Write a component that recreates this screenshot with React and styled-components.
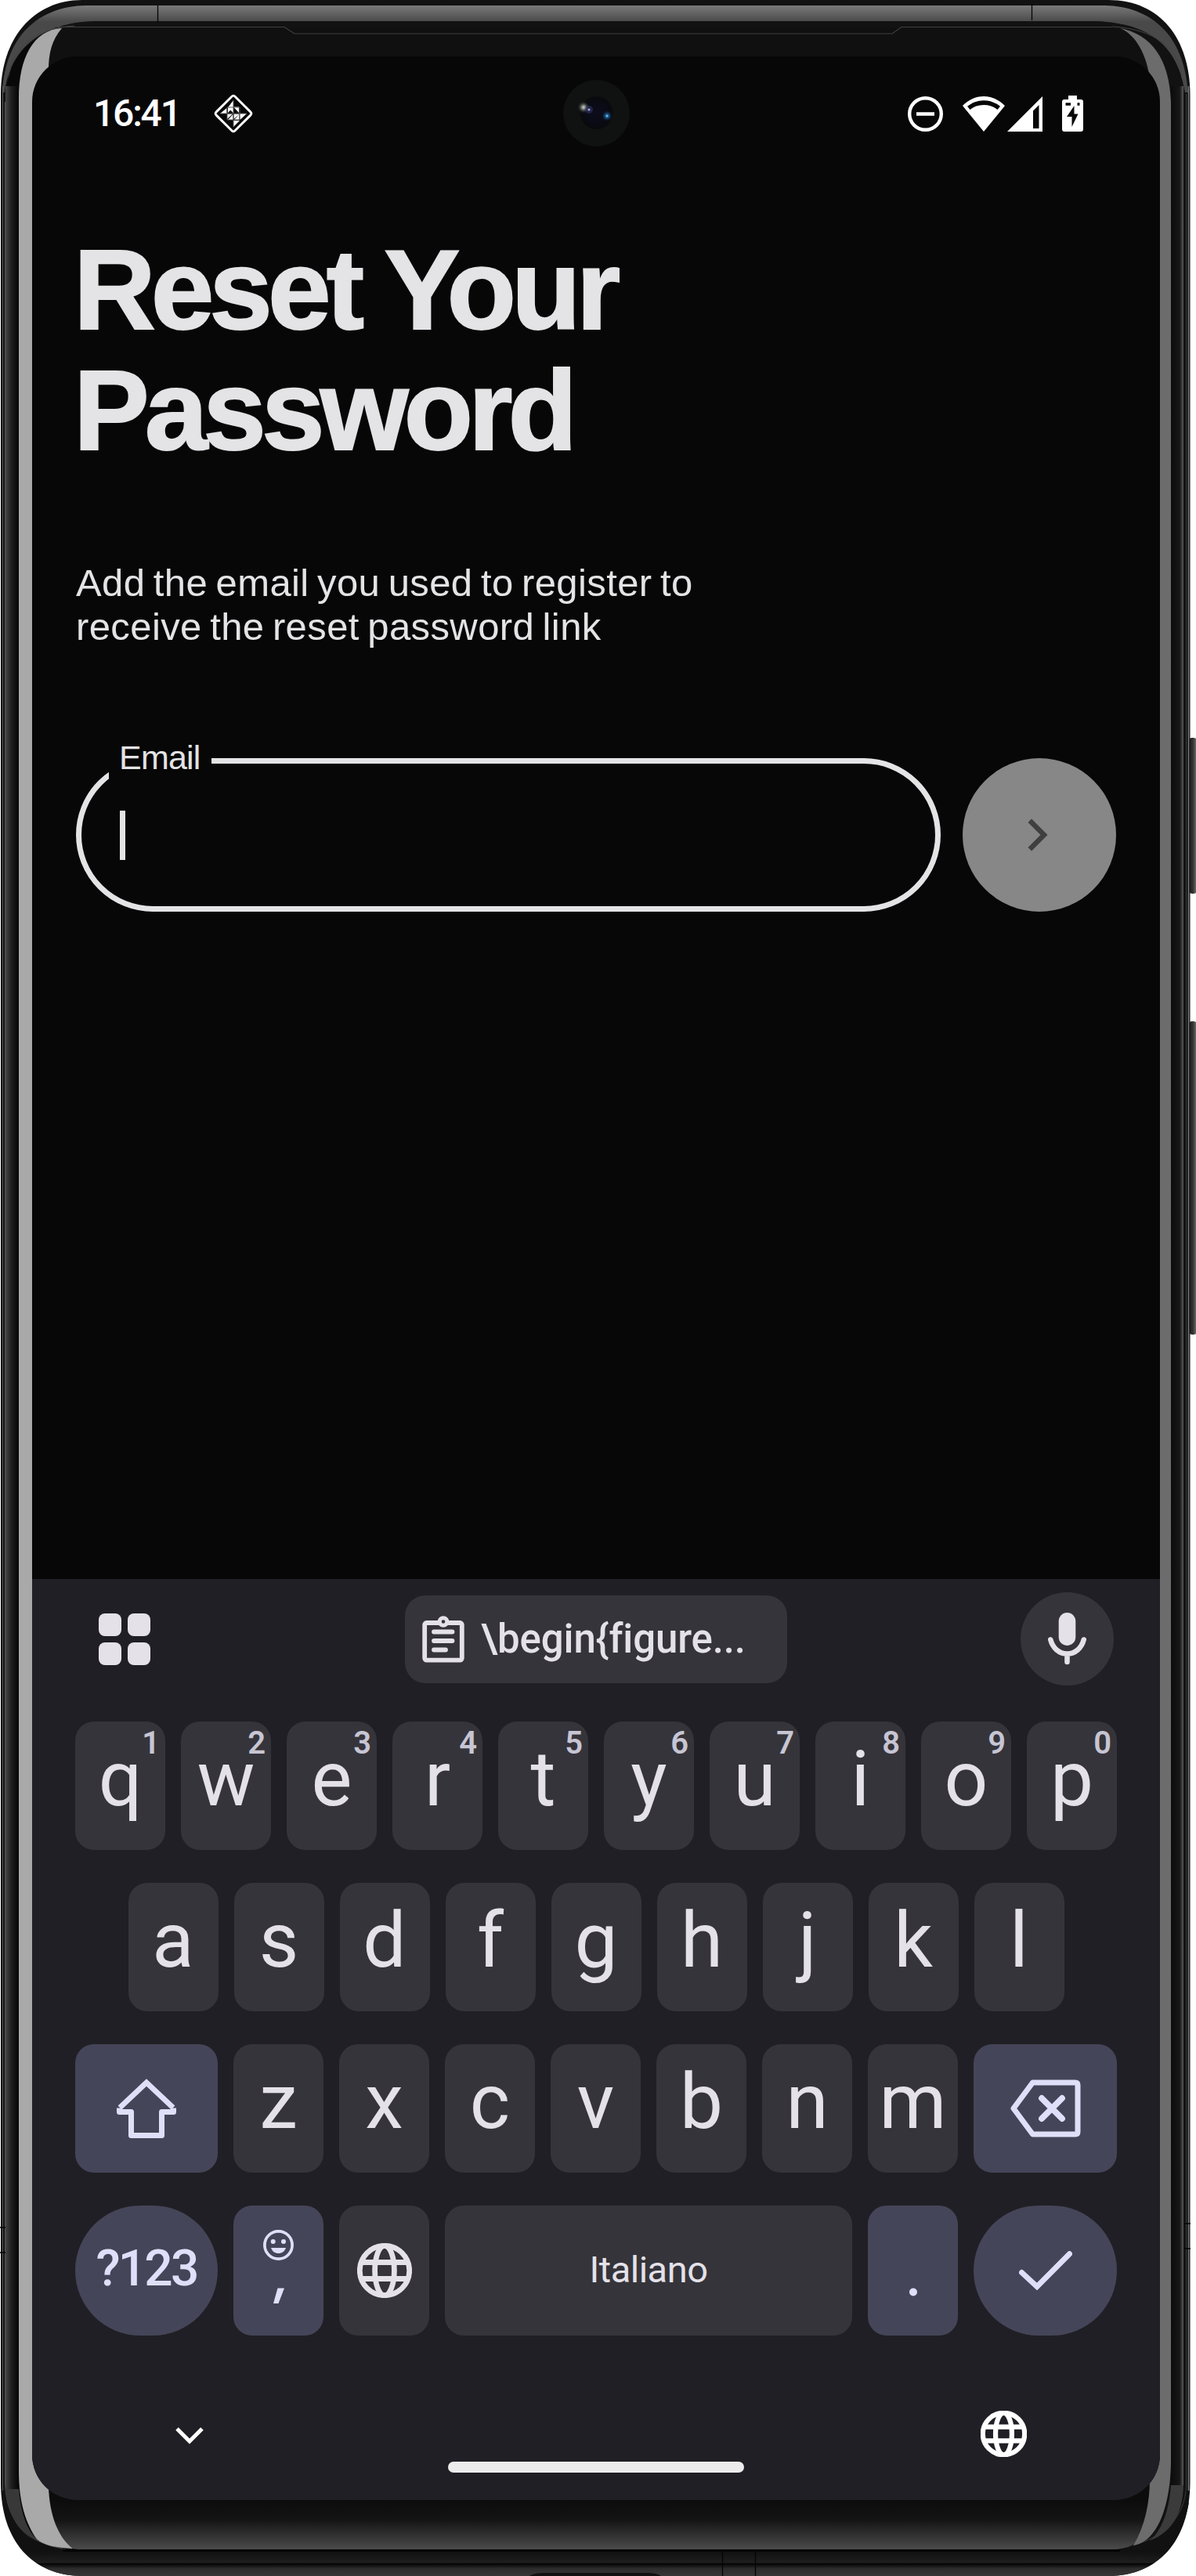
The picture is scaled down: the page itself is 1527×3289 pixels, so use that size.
import React from "react";
import styled, { createGlobalStyle, css } from "styled-components";

const GlobalStyle = createGlobalStyle`
  * { box-sizing: border-box; }
  body { margin: 0; background: #fff; }
  svg { display: block; flex: none; }
`;

const ui = `Roboto, "Noto Sans", sans-serif`;
const brand = `"Liberation Sans", Arial, sans-serif`;

const Device = styled.div`
  position: relative;
  width: 1527px;
  height: 3289px;
  padding: 72px 46px 97px 41px;
  overflow: hidden;
`;

const Casing = styled.svg`
  position: absolute;
  inset: 0;
`;

const Screen = styled.div`
  position: relative;
  display: flex;
  flex-direction: column;
  width: 1440px;
  height: 3120px;
  border-radius: 58px;
  overflow: hidden;
  background: #070707;
`;

const StatusBar = styled.header`
  display: flex;
  align-items: center;
  height: 146px;
  padding: 0 98px 0 78px;
  color: #fff;
`;

const Clock = styled.span`
  font: 500 48px/56px ${ui};
  letter-spacing: -2.2px;
  width: 154px;
`;

const StatusIcons = styled.div`
  display: flex;
  align-items: center;
  margin-left: auto;
`;

const Spacer = styled.span`
  width: ${(p) => p.$w}px;
`;

const Camera = styled.svg`
  position: absolute;
  left: 678px;
  top: 29px;
`;

const Main = styled.main`
  flex: 1;
  padding: 75px 56px 0;
  font-family: ${brand};
  color: #e4e3e5;
`;

const Title = styled.h1`
  margin: 0 0 115px -3px;
  font-size: 145px;
  line-height: 154px;
  font-weight: 700;
  letter-spacing: -6px;
  -webkit-text-stroke: 2px #e4e3e5;
`;

const Hint = styled.p`
  margin: 0 0 140px;
  font-size: 49px;
  line-height: 56px;
  letter-spacing: 0.4px;
  word-spacing: -3.6px;
`;

const Form = styled.div`
  display: flex;
  justify-content: space-between;
`;

const Field = styled.div`
  position: relative;
  display: flex;
  align-items: center;
  width: 1104px;
  height: 196px;
  padding-left: 49px;
  border: 7px solid #e4e3e5;
  border-radius: 98px;
`;

const FieldLabel = styled.label`
  position: absolute;
  left: 35px;
  top: -33px;
  width: 131px;
  height: 55px;
  padding-left: 13px;
  font-size: 43px;
  line-height: 50px;
  letter-spacing: -0.8px;
  background: #070707;
`;

const Caret = styled.span`
  width: 7px;
  height: 63px;
  background: #e4e3e5;
`;

const Submit = styled.button`
  display: grid;
  place-items: center;
  width: 196px;
  height: 196px;
  padding: 0;
  border: 0;
  border-radius: 50%;
  background: #878787;
`;

const Keyboard = styled.section`
  height: 1176px;
  background: #201f25;
  font-family: ${ui};
  color: #e4e1e9;
`;

const Toolbar = styled.div`
  display: grid;
  grid-template-columns: 1fr auto 1fr;
  align-items: center;
  height: 153px;
  margin-bottom: 29px;
`;

const AppsIcon = styled.svg`
  margin-left: 85px;
`;

const Clip = styled.div`
  display: flex;
  align-items: center;
  gap: 21px;
  width: 488px;
  height: 112px;
  padding-left: 22px;
  border-radius: 26px;
  background: #35343a;
  font-size: 51px;
  font-weight: 500;
  line-height: 60px;
  letter-spacing: -0.15px;
  white-space: nowrap;
`;

const Mic = styled.div`
  display: grid;
  place-items: center;
  justify-self: end;
  width: 119px;
  height: 119px;
  margin-right: 59px;
  border-radius: 50%;
  background: #35343a;
`;

const Rows = styled.div`
  display: flex;
  flex-direction: column;
  gap: 42px;
`;

const Row = styled.div`
  display: flex;
  justify-content: center;
  gap: 20px;
  height: ${(p) => p.$h || 164}px;
`;

const Key = styled.div`
  position: relative;
  display: flex;
  align-items: center;
  justify-content: center;
  width: ${(p) => p.$w || 115}px;
  border-radius: ${(p) => (p.$pill ? 83 : 24)}px;
  background: ${(p) => (p.$accent ? "#454559" : "#35343a")};
  color: ${(p) => (p.$accent ? "#e0dff9" : "#e4e1e9")};
  ${(p) =>
    p.$stack &&
    css`
      flex-direction: column;
      justify-content: flex-start;
    `}
`;

const Letter = styled.span`
  display: block;
  margin-top: -16px;
  font-size: 98px;
  line-height: 60px;
`;

const Alt = styled.sup`
  position: absolute;
  right: 7px;
  top: 8px;
  font-size: 40px;
  line-height: 40px;
  font-weight: 600;
  color: #c7c5d3;
`;

const Symbols = styled.span`
  margin-top: -5px;
  font-size: 64px;
  line-height: 76px;
  font-weight: 500;
  letter-spacing: -2.8px;
`;

const SpaceLabel = styled.span`
  margin-top: -2px;
  font-size: 47px;
  line-height: 56px;
  letter-spacing: -0.5px;
`;

const NavBar = styled.nav`
  display: grid;
  grid-template-columns: 1fr auto 1fr;
  align-items: start;
  height: 210px;
`;

const Collapse = styled.svg`
  margin: 117px 0 0 183px;
`;

const HomePill = styled.span`
  width: 378px;
  height: 14px;
  margin-top: 161px;
  border-radius: 7px;
  background: #ececec;
`;

const NavGlobe = styled.span`
  justify-self: end;
  margin: 96px 170px 0 0;
  color: #fff;
`;

const Globe = ({ w, h, sw }) => (
  <svg width={w} height={h} viewBox="0 0 70 70" preserveAspectRatio="none" fill="none" stroke="currentColor" strokeWidth={sw}>
    <circle cx="35" cy="35" r="31.7" />
    <ellipse cx="35" cy="35" rx="12.4" ry="31.7" />
    <path d="M5.5 24.5H64.5M5.5 45.5H64.5" />
  </svg>
);

const Frame = () => (
  <Casing width="1527" height="3289" viewBox="0 0 1527 3289" fill="none">
    <defs>
      <linearGradient id="top" x1="0" y1="6" x2="0" y2="28" gradientUnits="userSpaceOnUse">
        <stop stopColor="#7c7c7c" />
        <stop offset="1" stopColor="#494949" />
      </linearGradient>
      <linearGradient id="leftEdge">
        <stop stopColor="#454545" />
        <stop offset=".45" stopColor="#1e1e1e" />
        <stop offset="1" stopColor="#050505" />
      </linearGradient>
      <linearGradient id="rightEdge">
        <stop stopColor="#0c0c0c" />
        <stop offset=".7" stopColor="#171717" />
        <stop offset="1" stopColor="#5a5a5a" />
      </linearGradient>
      <linearGradient id="chin" x1="0" y1="3192" x2="0" y2="3255" gradientUnits="userSpaceOnUse">
        <stop stopColor="#0c0c0c" />
        <stop offset=".4" stopColor="#141414" />
        <stop offset="1" stopColor="#4b4b4b" />
      </linearGradient>
      <linearGradient id="foot" x1="0" y1="3258" x2="0" y2="3289" gradientUnits="userSpaceOnUse">
        <stop stopColor="#111" />
        <stop offset=".45" stopColor="#1e1e1e" />
        <stop offset=".5" stopColor="#050505" />
        <stop offset=".7" stopColor="#2c2c2c" />
        <stop offset="1" stopColor="#363636" />
      </linearGradient>
      <linearGradient id="button">
        <stop stopColor="#151515" />
        <stop offset=".5" stopColor="#333" />
        <stop offset="1" stopColor="#858585" />
      </linearGradient>
    </defs>
    <rect x="1517" y="942" width="12" height="199" rx="5" fill="url(#button)" />
    <rect x="1517" y="1304" width="12" height="400" rx="5" fill="url(#button)" />
    <path d="M105 0H1415C1482 0 1519 50 1519.5 120V3170C1519 3245 1478 3289 1415 3289H105C42 3289 1 3245 1 3170V120C1 50 42 0 105 0Z" fill="#121212" />
    <path d="M30 3220C50 3252 80 3258 120 3258H1400C1440 3258 1475 3246 1500 3215L1518 3195C1508 3250 1475 3289 1415 3289H105C50 3289 16 3255 5 3200Z" fill="url(#foot)" />
    <path d="M3 118C7 45 50 8 110 7H1410C1470 8 1512 45 1517 118L1513 118C1504 60 1470 30 1400 27H120C55 29 13 60 6 118Z" fill="url(#top)" />
    <path d="M3.5 110V3180M6.5 130V3170C8 3225 40 3253 100 3256" stroke="#555" strokeWidth="1" />
    <path d="M1517.5 110V3180" stroke="#777" strokeWidth="1.5" />
    <path d="M1514.5 120V3175C1512 3225 1470 3254 1400 3256" stroke="#3c3c3c" strokeWidth="1" />
    <path d="M11 100C15 60 45 36 95 33M1509 100C1505 62 1475 37 1420 34" stroke="#444" strokeWidth="1" />
    <path d="M7 125C10 68 45 36 100 36V3254C45 3252 9 3222 7 3165Z" fill="#080808" />
    <rect x="7" y="110" width="17" height="3070" fill="url(#leftEdge)" />
    <rect x="1495" y="110" width="16" height="3065" fill="url(#rightEdge)" />
    <path d="M7 3178H24C27 3212 36 3235 52 3246C24 3236 10 3212 7 3178Z" fill="#383838" />
    <path d="M1511 3173H1495C1493 3200 1486 3228 1468 3244C1498 3232 1510 3208 1511 3173Z" fill="#3b3b3b" />
    <path d="M85 36H1425C1460 38 1480 70 1482 120V3170C1482 3225 1460 3254 1425 3255H85C60 3250 50 3220 50 3170V120C50 80 60 40 85 36Z" fill="#101010" />
    <path d="M60 3175H1480C1478 3225 1460 3255 1420 3255H100C75 3255 60 3220 60 3175Z" fill="url(#chin)" />
    <path d="M24 125C24 75 42 38 79 36C66 51 62 68 62 90V3175C63 3210 74 3240 93 3254C72 3253 56 3250 47 3242C33 3222 24 3195 24 3155Z" fill="#a9a9a9" />
    <path d="M1430 36C1470 44 1493 75 1495 130V3140C1495 3195 1480 3245 1447 3250C1462 3225 1468 3195 1468 3165V100C1464 70 1450 44 1430 36Z" fill="#6c6c6c" />
    <path d="M70 34.5H363L376 43H1139L1151 34.5H1420" stroke="#3f3f3f" strokeWidth="1.2" />
    <path d="M80 3256.5H1430" stroke="#040404" strokeWidth="3" />
    <path d="M201.5 7V29M1317.5 5V26M922.5 3257V3289M964.5 3257V3289M0 2844H7M0 2876H7M1512 2839H1520M1512 2871H1520" stroke="#050505" strokeWidth="1.3" />
    <path d="M676 3289C682 3285 690 3285 700 3285H820C832 3285 838 3285 844 3289Z" fill="#111" />
  </Casing>
);

const Lens = () => (
  <Camera width="85" height="87" viewBox="0 0 85 87">
    <defs>
      <radialGradient id="glass">
        <stop stopColor="#0d0c1c" />
        <stop offset=".7" stopColor="#090b14" />
        <stop offset="1" stopColor="#090a0a" />
      </radialGradient>
      <radialGradient id="glint">
        <stop stopColor="#d3d8d0" />
        <stop offset=".35" stopColor="#6f7670" />
        <stop offset="1" stopColor="#101313" stopOpacity="0" />
      </radialGradient>
      <radialGradient id="blue">
        <stop stopColor="#a8dcf5" />
        <stop offset=".3" stopColor="#195a8d" />
        <stop offset="1" stopColor="#081a38" stopOpacity="0" />
      </radialGradient>
    </defs>
    <circle cx="42.5" cy="43.5" r="42.5" fill="#101111" />
    <circle cx="42.5" cy="43" r="21" fill="url(#glass)" />
    <circle cx="26" cy="36" r="8" fill="url(#glint)" />
    <circle cx="33" cy="39" r="5" fill="#31366a" opacity=".6" />
    <circle cx="33" cy="39" r="1.6" fill="#a6a0ce" />
    <circle cx="56" cy="47" r="7" fill="url(#blue)" />
  </Camera>
);

const Diamond = () => (
  <svg width="50" height="50" viewBox="0 0 50 50">
    <path d="M22.9 3.2Q25 1 27.1 3.2L46.8 22.9Q49 25 46.8 27.1L27.1 46.8Q25 49 22.9 46.8L3.2 27.1Q1 25 3.2 22.9Z" fill="none" stroke="#fff" strokeWidth="2.9" />
    <path d="M25 8V16.500H18.500ZM16.500 18V25H8ZM18 16.500H25L18 24ZM25 16.500L32 24V16.500ZM25 17V24.500L18 17ZM33 25H42L33.500 33ZM25.500 25.500H33L25.500 32ZM17 25.500H24L17 32ZM24.500 26V33H18ZM32.500 26V33H26ZM25 34H33L25 42Z" fill="#fff" />
    <path d="M8 25H42M25 8V42M17 17V33M33 17V33M17 17H33M17 33H33" stroke="#555" strokeWidth="1" />
  </svg>
);

const rowOne = "qwertyuiop".split("");
const rowTwo = "asdfghjkl".split("");
const rowThree = "zxcvbnm".split("");

export default function App() {
  return (
    <Device>
      <GlobalStyle />
      <Frame />
      <Screen>
        <StatusBar>
          <Clock>16:41</Clock>
          <Diamond />
          <Lens />
          <StatusIcons>
            <svg width="45" height="45" viewBox="0 0 45 45" fill="none" stroke="#fff">
              <circle cx="22.5" cy="22.5" r="20.3" strokeWidth="4.4" />
              <path d="M11 22.5H34" strokeWidth="4.6" />
            </svg>
            <Spacer $w={25} />
            <svg width="54" height="45" viewBox="0 0 54 45" fill="#fff">
              <path fillRule="evenodd" d="M27 0C37.5 0 46.500 4.500 54 12L27 45L0 12C7.500 4.500 16.500 0 27 0ZM6 12.800L9.500 17C14 13 20 11 27 11C34 11 40 13 44.500 17L48 12.800C42 8 35 5.200 27 5.200C19 5.200 12 8 6 12.800Z" />
            </svg>
            <Spacer $w={3} />
            <svg width="45" height="45" viewBox="0 0 45 45" fill="#fff">
              <path fillRule="evenodd" d="M45 0V45H0ZM40.500 11L33 18.500V41H40.500Z" />
            </svg>
            <Spacer $w={25} />
            <svg width="27" height="46" viewBox="0 0 27 46">
              <path d="M8 0H19V5H24Q27 5 27 8V43Q27 46 24 46H3Q0 46 0 43V8Q0 5 3 5H8Z" fill="#fff" />
              <path d="M15.500 13L6 27H12.500V40L20.500 23.500H15.500Z" fill="#070707" />
              <path d="M4.500 11H11M19.500 11H22.500" stroke="#070707" strokeWidth="3.500" />
            </svg>
          </StatusIcons>
        </StatusBar>

        <Main>
          <Title>
            Reset Your
            <br />
            Password
          </Title>
          <Hint>
            Add the email you used to register to
            <br />
            receive the reset password link
          </Hint>
          <Form>
            <Field>
              <FieldLabel>Email</FieldLabel>
              <Caret />
            </Field>
            <Submit aria-label="Continue">
              <svg width="30" height="42" viewBox="0 0 30 42" fill="none" stroke="#3f3f3f" strokeWidth="6.500">
                <path d="M2.800 2.800L21 21L2.800 39.200" />
              </svg>
            </Submit>
          </Form>
        </Main>

        <Keyboard>
          <Toolbar>
            <AppsIcon width="66" height="66" viewBox="0 0 66 66" fill="#e4e1e9">
              <rect width="29" height="29" rx="8" />
              <rect x="37" width="29" height="29" rx="8" />
              <rect y="37" width="29" height="29" rx="8" />
              <rect x="37" y="37" width="29" height="29" rx="8" />
            </AppsIcon>
            <Clip>
              <svg width="54" height="60" viewBox="0 0 54 60" fill="none" stroke="#e4e1e9" strokeLinecap="round" strokeLinejoin="round">
                <rect x="3.200" y="9" width="47.600" height="47.600" rx="2.500" strokeWidth="5.800" />
                <circle cx="27" cy="7.500" r="4.800" fill="#35343a" strokeWidth="5" />
                <path d="M15 20.500H38.500M15 32H38.500M15 43.500H30" strokeWidth="5.800" />
              </svg>
              {"\\begin{figure..."}
            </Clip>
            <Mic>
              <svg width="49" height="67" viewBox="0 0 49 67">
                <rect x="13.700" width="21.600" height="42" rx="10.800" fill="#e4e1e9" />
                <path d="M3.300 34.500C6 45 14 52.500 24.500 52.500S43 45 45.700 34.500M24.500 53V63" fill="none" stroke="#e4e1e9" strokeWidth="6.600" strokeLinecap="round" />
              </svg>
            </Mic>
          </Toolbar>

          <Rows>
            <Row>
              {rowOne.map((c, i) => (
                <Key key={c}>
                  <Letter>{c}</Letter>
                  <Alt>{(i + 1) % 10}</Alt>
                </Key>
              ))}
            </Row>
            <Row>
              {rowTwo.map((c) => (
                <Key key={c}>
                  <Letter>{c}</Letter>
                </Key>
              ))}
            </Row>
            <Row>
              <Key $w={182} $accent>
                <svg width="80" height="78" viewBox="0 0 80 78" fill="none" stroke="#e0dff9" strokeWidth="7" strokeLinejoin="round">
                  <path strokeLinejoin="miter" d="M6 38L40 6L74 38" />
                  <path d="M5.500 38.500V43.500H20.500V73.500H59.500V43.500H74.500V38.500" />
                </svg>
              </Key>
              {rowThree.map((c) => (
                <Key key={c}>
                  <Letter>{c}</Letter>
                </Key>
              ))}
              <Key $w={183} $accent>
                <svg width="90" height="74" viewBox="0 0 90 74" fill="none" stroke="#e0dff9" strokeWidth="7" strokeLinejoin="round" strokeLinecap="round">
                  <path d="M28.500 4H83Q86 4 86 7V67Q86 70 83 70H28.500L4 37Z" />
                  <path d="M40 24L66 50M66 24L40 50" strokeWidth="7.800" />
                </svg>
              </Key>
            </Row>
            <Row $h={166}>
              <Key $w={182} $accent $pill>
                <Symbols>?123</Symbols>
              </Key>
              <Key $accent $stack>
                <svg width="39" height="127" viewBox="0 0 39 127" fill="#e0dff9">
                  <circle cx="19.500" cy="50.500" r="17.600" fill="none" stroke="#e0dff9" strokeWidth="3.700" />
                  <circle cx="12.700" cy="46" r="3" />
                  <circle cx="26" cy="46" r="3" />
                  <path d="M10 54H29C27.500 58.500 24 61 19.500 61S11.500 58.500 10 54Z" />
                  <path d="M18.500 105.500H27L19.500 125H13Z" />
                </svg>
              </Key>
              <Key>
                <Globe w={70} h={70} sw={6.8} />
              </Key>
              <Key $w={520}>
                <SpaceLabel>Italiano</SpaceLabel>
              </Key>
              <Key $accent $stack>
                <svg width="10" height="116" viewBox="0 0 10 116" fill="#e0dff9">
                  <circle cx="5" cy="110.500" r="5" />
                </svg>
              </Key>
              <Key $w={183} $accent $pill>
                <svg width="68" height="50" viewBox="0 0 68 50" fill="none" stroke="#e0dff9" strokeWidth="7" strokeLinecap="round">
                  <path d="M3.500 27.500L23 45.500L64.500 3.700" />
                </svg>
              </Key>
            </Row>
          </Rows>

          <NavBar>
            <Collapse width="36" height="22" viewBox="0 0 36 22" fill="none" stroke="#fff" strokeWidth="5">
              <path d="M2 2L18 18L34 2" />
            </Collapse>
            <HomePill />
            <NavGlobe>
              <Globe w={59} h={59} sw={7.4} />
            </NavGlobe>
          </NavBar>
        </Keyboard>
      </Screen>
    </Device>
  );
}
